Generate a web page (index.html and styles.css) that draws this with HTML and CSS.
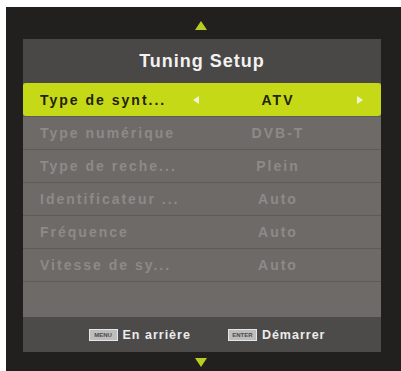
FILE: index.html
```html
<!DOCTYPE html>
<html>
<head>
<meta charset="utf-8">
<link rel="stylesheet" href="styles.css">
</head>
<body>
<div class="screen">
  <div class="nav-arrow up"></div>
  <div class="panel">
    <div class="title">Tuning Setup</div>
    <div class="row active">
      <span class="label">Type de synt...</span>
      <span class="tri left"></span>
      <span class="value">ATV</span>
      <span class="tri right"></span>
    </div>
    <div class="row"><span class="label">Type numérique</span><span></span><span class="value">DVB-T</span><span></span></div>
    <div class="row"><span class="label">Type de reche...</span><span></span><span class="value">Plein</span><span></span></div>
    <div class="row"><span class="label">Identificateur ...</span><span></span><span class="value">Auto</span><span></span></div>
    <div class="row"><span class="label">Fréquence</span><span></span><span class="value">Auto</span><span></span></div>
    <div class="row"><span class="label">Vitesse de sy...</span><span></span><span class="value">Auto</span><span></span></div>
    <div class="row empty"></div>
    <div class="footer">
      <span class="hint"><span class="key">MENU</span>En arrière</span>
      <span class="hint"><span class="key">ENTER</span>Démarrer</span>
    </div>
  </div>
  <div class="nav-arrow down"></div>
</div>
</body>
</html>
```
FILE: styles.css
```css
html, body {
  margin: 0;
  padding: 0;
  background: #ffffff;
}
body {
  width: 401px;
  height: 371px;
  overflow: hidden;
  font-family: "Liberation Sans", Arial, sans-serif;
}
.screen {
  margin: 7px 0 0 6px;
  width: 395px;
  height: 364px;
  background: #221f1f;
  display: flex;
  flex-direction: column;
  padding: 14px 0 0 17px;
  box-sizing: border-box;
}
.nav-arrow {
  width: 0;
  height: 0;
  margin-left: 172px;
  border-left: 6px solid transparent;
  border-right: 6px solid transparent;
}
.nav-arrow.up {
  border-bottom: 9px solid #b6cd22;
  margin-bottom: 9px;
}
.nav-arrow.down {
  border-top: 9px solid #b6cd22;
  margin-top: 6px;
}
.panel {
  width: 358px;
  height: 313px;
  background: #6d6a68;
  display: flex;
  flex-direction: column;
}
.title {
  height: 44px;
  background: #4a4847;
  color: #f2f2f2;
  font-weight: bold;
  font-size: 18px;
  letter-spacing: 1px;
  display: flex;
  align-items: center;
  justify-content: center;
}
.row {
  height: 33px;
  box-sizing: border-box;
  display: grid;
  grid-template-columns: 150px 12px 1fr 12px;
  align-items: center;
  padding: 0 15px 0 17px;
  border-top: 1px solid #5d5a58;
  color: #8d8a87;
  font-weight: bold;
  font-size: 14px;
  letter-spacing: 2px;
}
.row.active {
  background: #c6d917;
  color: #23220c;
  border-top: none;
  border-radius: 3px;
}
.row.empty {
  height: 36px;
}
.label {
  white-space: nowrap;
}
.value {
  text-align: center;
}
.tri {
  width: 0;
  height: 0;
  border-top: 4px solid transparent;
  border-bottom: 4px solid transparent;
  justify-self: center;
}
.tri.left {
  border-right: 6px solid #eef2d8;
}
.tri.right {
  border-left: 6px solid #eef2d8;
}
.footer {
  height: 35px;
  background: #4d4b4a;
  display: flex;
  align-items: center;
  justify-content: center;
  gap: 37px;
  padding-left: 10px;
  color: #ececec;
  font-weight: bold;
  font-size: 12.5px;
  letter-spacing: 1px;
}
.hint {
  display: flex;
  align-items: center;
  gap: 5px;
}
.key {
  display: inline-block;
  width: 29px;
  height: 12px;
  line-height: 10px;
  background: #bdbdbd;
  border: 1px solid #e6e6e6;
  box-sizing: border-box;
  color: #4a4a4a;
  font-size: 6px;
  letter-spacing: 0;
  text-align: center;
}
```
